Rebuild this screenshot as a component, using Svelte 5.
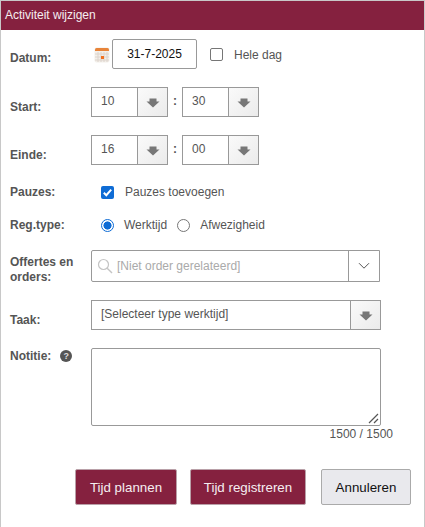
<script>
  const arrow = "M0.5 3.5H3.5V0.5H10.5V3.5H13.5L7 9.5Z";
</script>

<div class="dialog">
  <header class="title">Activiteit wijzigen</header>
  <form class="form">
    <div class="row r-date">
      <span class="label lab-date">Datum:</span>
      <div class="field date-field">
        <svg class="cal" width="16" height="16" viewBox="0 0 16 16">
          <rect x="0.5" y="0.5" width="15" height="15" rx="2" fill="#f3efea"/>
          <path d="M1 2.5Q1 1 2.5 1H13.5Q15 1 15 2.5V4H1Z" fill="#e8843a"/>
          <path d="M1 7H15M1 10H15M1 13H15M4 5V15M7 5V15M10 5V15M13 5V15" stroke="#ddd4cc" stroke-width="1"/>
          <rect x="7" y="9" width="3" height="3" fill="#f07020"/>
        </svg>
        <div class="date-input">31-7-2025</div>
        <span class="box"></span>
        <span class="txt hele">Hele dag</span>
      </div>
    </div>

    <div class="row r-time">
      <span class="label lab-time">Start:</span>
      <div class="field">
        <div class="spin"><span class="val">10</span><span class="drop"><svg width="14" height="10" viewBox="0 0 14 10"><path d={arrow} fill="#777"/></svg></span></div>
        <span class="colon">:</span>
        <div class="spin"><span class="val">30</span><span class="drop"><svg width="14" height="10" viewBox="0 0 14 10"><path d={arrow} fill="#777"/></svg></span></div>
      </div>
    </div>

    <div class="row r-time">
      <span class="label lab-time">Einde:</span>
      <div class="field">
        <div class="spin"><span class="val">16</span><span class="drop"><svg width="14" height="10" viewBox="0 0 14 10"><path d={arrow} fill="#777"/></svg></span></div>
        <span class="colon">:</span>
        <div class="spin"><span class="val">00</span><span class="drop"><svg width="14" height="10" viewBox="0 0 14 10"><path d={arrow} fill="#777"/></svg></span></div>
      </div>
    </div>

    <div class="row r-pause">
      <span class="label">Pauzes:</span>
      <div class="field opts">
        <span class="checked"><svg width="13" height="13" viewBox="0 0 13 13"><path d="M2.8 6.8L5.3 9.2L10.2 3.6" fill="none" stroke="#fff" stroke-width="2"/></svg></span>
        <span class="txt">Pauzes toevoegen</span>
      </div>
    </div>

    <div class="row r-reg">
      <span class="label">Reg.type:</span>
      <div class="field opts">
        <span class="radio on"></span>
        <span class="txt werk">Werktijd</span>
        <span class="radio"></span>
        <span class="txt afw">Afwezigheid</span>
      </div>
    </div>

    <div class="row r-order">
      <span class="label two">Offertes en orders:</span>
      <div class="field combo">
        <svg class="search" width="16" height="16" viewBox="0 0 16 16"><circle cx="6.5" cy="6.5" r="5" fill="none" stroke="#c4c4c4" stroke-width="1.2"/><path d="M10.2 10.2L15 15" stroke="#c4c4c4" stroke-width="1.4"/></svg>
        <span class="ph">[Niet order gerelateerd]</span>
        <span class="chev"><svg width="12" height="8" viewBox="0 0 12 8"><path d="M1 1.2L6 6.2L11 1.2" fill="none" stroke="#555" stroke-width="1"/></svg></span>
      </div>
    </div>

    <div class="row r-task">
      <span class="label lab-task">Taak:</span>
      <div class="field select">
        <span class="sel-text">[Selecteer type werktijd]</span>
        <span class="drop"><svg width="14" height="10" viewBox="0 0 14 10"><path d={arrow} fill="#777"/></svg></span>
      </div>
    </div>

    <div class="row r-note">
      <span class="label note-label">Notitie:<span class="help">?</span></span>
      <div class="note-col">
        <div class="textarea">
          <svg class="grip" width="11" height="11" viewBox="0 0 11 11"><path d="M1 10L10 1M6 10L10 6" stroke="#555" stroke-width="1.2" fill="none"/></svg>
        </div>
        <div class="count">1500 / 1500</div>
      </div>
    </div>

    <div class="actions">
      <button type="button" class="btn primary plan">Tijd plannen</button>
      <button type="button" class="btn primary reg">Tijd registreren</button>
      <button type="button" class="btn cancel">Annuleren</button>
    </div>
  </form>
</div>

<style>
  :global(body) { margin: 0; background: #fff; }
  .dialog {
    box-sizing: border-box;
    width: 425px;
    height: 527px;
    border: 1px solid #c8c8c8;
    border-bottom: 0;
    font-family: "Liberation Sans", Arial, sans-serif;
    font-size: 12px;
    color: #555;
    background: #fff;
    overflow: hidden;
  }
  .title {
    height: 29px;
    line-height: 28px;
    padding-left: 4px;
    background: #85213f;
    color: #f5eef1;
    font-size: 12px;
  }
  .form { padding: 9px 0 0 9px; }
  .row { display: flex; align-items: flex-start; }
  .label {
    width: 81px;
    flex: none;
    font-weight: bold;
    color: #555;
    line-height: 14px;
  }
  .field { display: flex; align-items: center; }
  .r-date { height: 30px; margin-bottom: 18px; }
  .lab-date { padding-top: 12px; }
  .date-field { height: 30px; }
  .cal { margin: 2px 2px 0 3px; }
  .date-input {
    box-sizing: border-box;
    width: 85px;
    height: 30px;
    line-height: 29px;
    border: 1px solid #999;
    border-radius: 2px;
    color: #111;
    text-align: center;
    font-size: 12px;
  }
  .box {
    box-sizing: border-box;
    width: 13px;
    height: 13px;
    margin: 0 11px 0 13px;
    border: 1px solid #767676;
    border-radius: 2px;
  }
  .txt { color: #555; font-size: 12px; line-height: 14px; }
  .hele { padding-top: 1px; }
  .r-time { height: 30px; margin-bottom: 18px; }
  .lab-time { padding-top: 13px; }
  .spin {
    box-sizing: border-box;
    width: 77px;
    height: 30px;
    display: flex;
    border: 1px solid #999;
  }
  .val {
    width: 45px;
    padding-left: 9px;
    box-sizing: border-box;
    line-height: 27px;
    color: #555;
  }
  .drop {
    flex: 1;
    display: flex;
    align-items: center;
    justify-content: center;
    border-left: 1px solid #999;
    background: linear-gradient(135deg, #fafafa, #ebebeb);
  }
  .drop svg { margin-top: 2px; }
  .colon { width: 14px; text-align: center; font-weight: bold; margin-top: -3px; }
  .r-pause { height: 16px; padding-top: 1px; margin-bottom: 17px; }
  .r-pause .label, .r-reg .label { padding-top: 1px; }
  .opts { height: 16px; padding-left: 10px; }
  .checked {
    box-sizing: border-box;
    width: 13px;
    height: 13px;
    border-radius: 2px;
    background: #0f6cd5;
    display: flex;
  }
  .checked + .txt { margin-left: 11px; }
  .r-reg { height: 16px; margin-bottom: 17px; }
  .radio {
    box-sizing: border-box;
    width: 13px;
    height: 13px;
    border-radius: 50%;
    border: 1px solid #767676;
  }
  .radio.on { border: 1px solid #0f6cd5; background: radial-gradient(circle, #0f6cd5 0 3.8px, #fff 4.3px); }
  .werk { margin: 0 10px 0 10px; }
  .afw { margin-left: 10px; }
  .r-order { height: 32px; margin-bottom: 18px; }
  .two { width: 81px; line-height: 15px; padding-top: 5px; }
  .combo {
    box-sizing: border-box;
    width: 289px;
    height: 32px;
    border: 1px solid #999;
    border-radius: 2px 0 0 2px;
    position: relative;
  }
  .search { margin-left: 5px; }
  .ph { margin-left: 4px; color: #aaa; }
  .chev {
    margin-left: auto;
    width: 30px;
    height: 100%;
    display: flex;
    align-items: center;
    justify-content: center;
    border-left: 1px solid #999;
  }
  .r-task { height: 30px; margin-bottom: 18px; }
  .lab-task { padding-top: 13px; }
  .select {
    box-sizing: border-box;
    width: 290px;
    height: 30px;
    border: 1px solid #999;
    align-items: stretch;
  }
  .sel-text { flex: 1; padding-left: 9px; line-height: 26px; color: #555; }
  .select .drop { flex: none; width: 29px; }
  .r-note { margin-bottom: 0; }
  .note-label { display: flex; align-items: center; height: 14px; padding-top: 1px; }
  .help {
    width: 12px;
    height: 12px;
    margin-left: 9px;
    border-radius: 50%;
    background: #555;
    color: #ddd;
    font-size: 9px;
    line-height: 12px;
    text-align: center;
  }
  .note-col { width: 302px; }
  .textarea {
    box-sizing: border-box;
    position: relative;
    width: 290px;
    height: 78px;
    border: 1px solid #999;
    border-radius: 2px;
  }
  .grip { position: absolute; right: 1px; bottom: 1px; }
  .count { text-align: right; line-height: 14px; margin-top: 1px; font-size: 12px; }
  .actions { display: flex; padding-left: 65px; margin-top: 28px; }
  .btn {
    box-sizing: border-box;
    height: 36px;
    border-radius: 2px;
    font-family: inherit;
    font-size: 13.333px;
    padding: 0;
    margin: 0;
  }
  .primary { background: #85213f; color: #f5eef1; border: 1px solid #b9a0a8; }
  .plan { width: 102px; margin-right: 13px; }
  .reg { width: 116px; margin-right: 15px; }
  .cancel { width: 90px; background: #e9e9ed; color: #111; border: 1px solid #aaa; }
</style>
